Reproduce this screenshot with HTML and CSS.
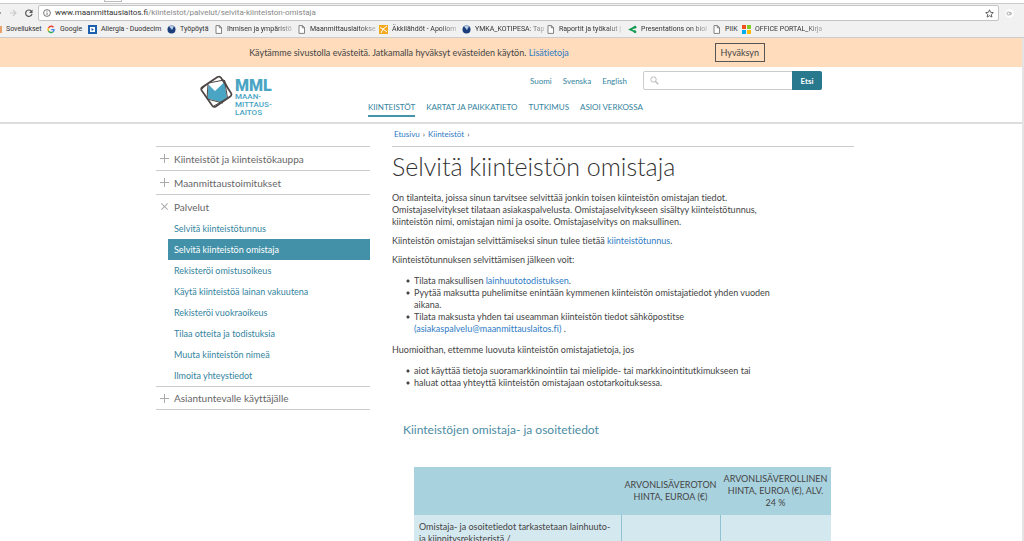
FILE: index.html
```html
<!DOCTYPE html>
<html lang="fi">
<head>
<meta charset="utf-8">
<title>Selvitä kiinteistön omistaja</title>
<link rel="stylesheet" href="styles.css">
</head>
<body>
<div class="browser">
  <div class="tab-strip"><span class="tab-edge"></span></div>
  <div class="toolbar">
    <svg class="nav-icons" width="34" height="10" viewBox="0 0 34 10" fill="none" stroke="#555" stroke-width="1.2"><path d="M0 5h1"/><path stroke="#ccc" d="M10 5h6M13 2l3 3-3 3"/><path d="M31.200 3A3.200 3.200 0 1 0 32 5.800"/><path fill="#555" stroke="none" d="M32.500 1.500v3.500h-3.500z"/></svg>
    <div class="address">
      <svg width="8" height="8" viewBox="0 0 8 8" fill="none" stroke="#555" stroke-width=".8"><circle cx="4" cy="4" r="3.400"/><path d="M4 3.500v2.500M4 1.800v.9"/></svg>
      <span class="url"><b>www.maanmittauslaitos.fi</b>/kiinteistot/palvelut/selvita-kiinteiston-omistaja</span>
      <svg width="9" height="9" viewBox="0 0 9 9" fill="none" stroke="#555" stroke-width=".9"><path d="M4.500.8l1.100 2.500 2.700.3-2 1.800.6 2.700-2.400-1.400-2.400 1.400.6-2.700-2-1.800 2.700-.3z"/></svg>
    </div>
    <svg class="ext" width="9" height="9" viewBox="0 0 9 9" fill="none" stroke="#999" stroke-width=".8"><circle cx="4.500" cy="4.500" r="4.300" stroke="none" fill="#fff"/><rect x="2" y="3" width="3" height="3" rx="1"/><path d="M5 3l2 1.500L5 6"/></svg>
  </div>
  <div class="bookmarks">
    <a href="#"><span class="apps-edge"></span><span>Sovellukset</span></a>
    <a href="#"><svg viewBox="0 0 9 9" fill="none" stroke-width="1.400"><path stroke="#ea4335" d="M1.500 3A3 3 0 0 1 6.500 2.200"/><path stroke="#fbbc05" d="M1.500 3a3 3 0 0 0 0 3"/><path stroke="#34a853" d="M1.500 6a3 3 0 0 0 4.600.8"/><path stroke="#4285f4" d="M6.100 6.800A3 3 0 0 0 7 4.600H4.200"/></svg><span>Google</span></a>
    <a href="#"><svg viewBox="0 0 9 9"><path fill="#1b5fae" d="M0 0h9v9H0z"/><path fill="#fff" d="M2 2h5v5H2z"/><path fill="#1b5fae" d="M3.500 3L6 4.500 3.500 6z"/></svg><span>Allergia - Duodecim</span></a>
    <a href="#"><svg viewBox="0 0 9 9"><circle cx="4.500" cy="4.500" r="4" fill="#1c3f7c"/><path fill="#b5cdea" d="M2 1.500q2.500-1.500 5 0L5 5z"/></svg><span>Työpöytä</span></a>
    <a class="faded" href="#"><svg viewBox="0 0 9 9" fill="#fff" stroke="#666" stroke-width=".8"><path d="M2 .6h3.500l2 2v5.800H2zM5.300.6v2.200h2.200"/></svg><span>Ihmisen ja ympäristö</span></a>
    <a class="faded" href="#"><svg viewBox="0 0 9 9" fill="#fff" stroke="#666" stroke-width=".8"><path d="M2 .6h3.500l2 2v5.800H2zM5.300.6v2.200h2.200"/></svg><span>Maanmittauslaitokse</span></a>
    <a class="faded" href="#"><svg viewBox="0 0 9 9"><path fill="#f5a81c" d="M0 0h9v9H0z"/><path fill="none" stroke="#fff" d="M1 2.500l3 1.500 4-3M2 8l2-4 4 3"/></svg><span>Äkkilähdöt - Apollom</span></a>
    <a class="faded" href="#"><svg viewBox="0 0 9 9"><circle cx="4.500" cy="4.500" r="4" fill="#1c3f7c"/><path fill="#b5cdea" d="M2 1.500q2.500-1.500 5 0L5 5z"/></svg><span>YMKA_KOTIPESA: Tap</span></a>
    <a class="faded" href="#"><svg viewBox="0 0 9 9" fill="#fff" stroke="#666" stroke-width=".8"><path d="M2 .6h3.500l2 2v5.800H2zM5.300.6v2.200h2.200"/></svg><span>Raportit ja työkalut |</span></a>
    <a class="faded" href="#"><svg viewBox="0 0 9 9" fill="#159a52"><path d="M0 4.500L7 1v2.200L4 4.500l4 1.500v2z"/><circle cx="7" cy="2.200" r="1.400"/><circle cx="7" cy="6.800" r="1.400"/></svg><span>Presentations on biol</span></a>
    <a href="#"><svg viewBox="0 0 9 9" fill="#fff" stroke="#666" stroke-width=".8"><path d="M2 .6h3.500l2 2v5.800H2zM5.300.6v2.200h2.200"/></svg><span>PIIK</span></a>
    <a class="faded" href="#"><svg viewBox="0 0 9 9"><path fill="#f1511b" d="M0 0h4v4H0z"/><path fill="#80cc28" d="M5 0h4v4H5z"/><path fill="#00adef" d="M0 5h4v4H0z"/><path fill="#fbbc09" d="M5 5h4v4H5z"/></svg><span>OFFICE PORTAL_Kirja</span></a>
  </div>
</div>
<div class="viewport">
  <div class="cookie">
    <p>Käytämme sivustolla evästeitä. Jatkamalla hyväksyt evästeiden käytön. <a href="#">Lisätietoja</a></p>
    <button type="button">Hyväksyn</button>
  </div>
  <header class="header">
    <div class="header-inner">
      <a class="logo" href="#" aria-label="Maanmittauslaitos">
        <svg width="33" height="34" viewBox="0 0 33 34" stroke-linejoin="round"><path fill="#4aa5c4" d="M8.500 9.500L15 16l9.500-9L27 23l-4.500 4.500L7.500 23.500z"/><g fill="none" stroke="#4d4644"><path stroke-width="1" d="M2 14L8.500 8 24 5l6 12M24.500 5L27.500 23 13 31.500M8 9l-1 15 16 4"/><path stroke-width="1.700" d="M2.200 12.200L17.500 2q2.200-1.200 3.500.8L31 18q1.200 2-.8 3.500L15.800 31.500q-2 1.200-3.500-.8L1.700 15.500q-1.200-2 .5-3.300z"/></g></svg>
        <span class="logo-text"><b>MML</b><span>MAAN-<br>MITTAUS-<br>LAITOS</span></span>
      </a>
      <div class="header-main">
        <div class="header-tools">
          <nav class="languages"><a href="#">Suomi</a><a href="#">Svenska</a><a href="#">English</a></nav>
          <form class="search">
            <svg width="9" height="9" viewBox="0 0 9 9" fill="none" stroke="#bbb"><circle cx="3.500" cy="3.500" r="2.700"/><path stroke-width="1.500" d="M5.500 5.500L8.300 8.300"/></svg>
            <input type="search" aria-label="Etsi sivustolta">
            <button type="submit">Etsi</button>
          </form>
        </div>
        <nav class="main-nav"><a class="current" href="#">KIINTEISTÖT</a><a href="#">KARTAT JA PAIKKATIETO</a><a href="#">TUTKIMUS</a><a href="#">ASIOI VERKOSSA</a></nav>
      </div>
    </div>
  </header>
  <div class="page">
    <nav class="side">
      <a class="section" href="#"><i class="plus"></i>Kiinteistöt ja kiinteistökauppa</a>
      <a class="section" href="#"><i class="plus"></i>Maanmittaustoimitukset</a>
      <a class="section" href="#"><i class="plus close"></i>Palvelut</a>
      <ul>
        <li><a href="#">Selvitä kiinteistötunnus</a></li>
        <li><a class="active" href="#">Selvitä kiinteistön omistaja</a></li>
        <li><a href="#">Rekisteröi omistusoikeus</a></li>
        <li><a href="#">Käytä kiinteistöä lainan vakuutena</a></li>
        <li><a href="#">Rekisteröi vuokraoikeus</a></li>
        <li><a href="#">Tilaa otteita ja todistuksia</a></li>
        <li><a href="#">Muuta kiinteistön nimeä</a></li>
        <li><a href="#">Ilmoita yhteystiedot</a></li>
      </ul>
      <a class="section last" href="#"><i class="plus"></i>Asiantuntevalle käyttäjälle</a>
    </nav>
    <main class="content">
      <nav class="crumbs"><a href="#">Etusivu</a><span>›</span><a href="#">Kiinteistöt</a><span>›</span></nav>
      <h1>Selvitä kiinteistön omistaja</h1>
      <p>On tilanteita, joissa sinun tarvitsee selvittää jonkin toisen kiinteistön omistajan tiedot.<br>Omistajaselvitykset tilataan asiakaspalvelusta. Omistajaselvitykseen sisältyy kiinteistötunnus,<br>kiinteistön nimi, omistajan nimi ja osoite. Omistajaselvitys on maksullinen.</p>
      <p>Kiinteistön omistajan selvittämiseksi sinun tulee tietää <a href="#">kiinteistötunnus</a>.</p>
      <p>Kiinteistötunnuksen selvittämisen jälkeen voit:</p>
      <ul>
        <li>Tilata maksullisen <a href="#">lainhuutotodistuksen</a>.</li>
        <li>Pyytää maksutta puhelimitse enintään kymmenen kiinteistön omistajatiedot yhden vuoden<br>aikana.</li>
        <li>Tilata maksusta yhden tai useamman kiinteistön tiedot sähköpostitse<br><a href="#">(asiakaspalvelu@maanmittauslaitos.fi)</a> .</li>
      </ul>
      <p>Huomioithan, ettemme luovuta kiinteistön omistajatietoja, jos</p>
      <ul>
        <li>aiot käyttää tietoja suoramarkkinointiin tai mielipide- tai markkinointitutkimukseen tai</li>
        <li>haluat ottaa yhteyttä kiinteistön omistajaan ostotarkoituksessa.</li>
      </ul>
      <h2>Kiinteistöjen omistaja- ja osoitetiedot</h2>
      <table>
        <colgroup><col class="col-name"><col class="col-net"><col></colgroup>
        <thead><tr><td></td><th scope="col">ARVONLISÄVEROTON<br>HINTA, EUROA (€)</th><th scope="col">ARVONLISÄVEROLLINEN<br>HINTA, EUROA (€), ALV.<br>24 %</th></tr></thead>
        <tbody><tr><td>Omistaja- ja osoitetiedot tarkastetaan lainhuuto-<br>ja kiinnitysrekisteristä /</td><td></td><td></td></tr></tbody>
      </table>
    </main>
  </div>
</div>
</body>
</html>
```
FILE: styles.css
```css
* { box-sizing: border-box; }
html, body { height: 100%; }
body {
  margin: 0;
  display: flex;
  flex-direction: column;
  overflow: hidden;
  background: #fff;
  color: #444;
  font: 9px/12px Lato, "Noto Sans", sans-serif;
  font-variant-ligatures: none;
}
a { color: #2e7bc4; text-decoration: none; }
p { margin: 0; }
ul { margin: 0; padding: 0; list-style: none; }
button, input { font: inherit; }

.browser { background: #f1f1f1; border-bottom: 1px solid #ccc; color: #444; font: 7px/10px Roboto, sans-serif; }
.tab-strip { height: 4px; border-bottom: 1px solid #ccc; background: #fff; }
.tab-edge { display: block; width: 18px; height: 2px; margin-left: 104px; border: 1px solid #bbb; border-top: 0; }
.toolbar { display: flex; align-items: center; padding: 1px 10px 0 0; }
.nav-icons { flex: none; }
.address {
  flex: 1;
  display: flex;
  align-items: center;
  gap: 4px;
  height: 16px;
  margin: 0 6px 0 4px;
  padding: 0 4px;
  border: 1px solid #c4c4c4;
  border-radius: 2px;
  background: #fff;
}
.url { flex: 1; color: #888; font-size: 8px; }
.url b { color: #333; font-weight: 400; }
.bookmarks {
  display: grid;
  grid-template-columns: 47px 41px 79px 47px 83px 82px 83px 84px 82px 84px 30px 1fr;
  align-items: center;
  height: 16px;
}
.bookmarks a { display: flex; align-items: center; gap: 4px; min-width: 0; color: #333; }
.bookmarks svg { flex: none; width: 9px; height: 9px; }
.bookmarks span { white-space: nowrap; }
.faded span { mask-image: linear-gradient(to right, #000 75%, rgba(0, 0, 0, .3)); }
.bookmarks .apps-edge { width: 2px; height: 7px; background: #e9a36a; }

.viewport { flex: 1; min-height: 0; overflow: hidden; border-right: 2px solid #e4e4e4; }
.cookie {
  display: flex;
  align-items: center;
  justify-content: center;
  gap: 146px;
  height: 29px;
  padding-right: 8px;
  background: #ffdcbc;
}
.cookie button { width: 50px; height: 19px; padding: 0; border: 1px solid #555; background: none; color: #444; }

.header { border-bottom: 2px solid #ddd; }
.header-inner { display: flex; justify-content: space-between; max-width: 622px; margin: 0 auto; height: 55px; }
.logo { display: flex; gap: 2px; padding-top: 8px; color: #4aa5c4; }
.logo-text { display: flex; flex-direction: column; padding-top: 4px; font: 500 8px/8px Roboto, sans-serif; }
.logo-text b { font-size: 16px; line-height: 14px; font-weight: 900; }
.header-main { width: 454px; }
.header-tools { display: flex; justify-content: flex-end; align-items: center; gap: 16px; padding-top: 4px; }
.languages { display: flex; gap: 11px; font-size: 8px; }
.languages a, .main-nav a, .side li a { color: #3484a0; }
.search { display: flex; align-items: center; width: 179px; height: 19px; border: 1px solid #ccc; border-radius: 2px; padding-left: 6px; }
.search input { flex: 1; min-width: 0; border: 0; background: none; outline: 0; }
.search button { width: 30px; height: 19px; padding: 0; border: 0; border-radius: 0 2px 2px 0; margin-right: -1px; background: #28798e; color: #fff; font-weight: 700; font-size: 8px; }
.main-nav { display: flex; gap: 11px; padding-top: 11px; font-size: 8px; }
.main-nav a { padding-bottom: 2px; border-bottom: 2px solid transparent; }
.main-nav .current { border-color: #4595a8; }

.page { display: flex; justify-content: space-between; max-width: 710px; margin: 0 auto; padding-right: 12px; }
.side { width: 214px; padding-top: 22px; }
.section { display: flex; align-items: center; gap: 5px; height: 24px; padding-left: 4px; border-top: 1px solid #ccc; color: #666; font-size: 10px; }
.section.last { border-bottom: 1px solid #ccc; }
.plus { width: 9px; height: 9px; background: linear-gradient(#aaa, #aaa) center / 9px 1px no-repeat, linear-gradient(#aaa, #aaa) center / 1px 9px no-repeat; }
.close { transform: rotate(45deg); }
.side ul { margin-left: 12px; }
.side li a { display: block; padding-left: 6px; line-height: 21px; }
.side li .active { background: #4391a8; color: #fff; }

.content { width: 462px; }
.crumbs { display: flex; gap: 3px; height: 23px; padding: 4px 2px 0; border-bottom: 1px solid #ccc; font-size: 8px; }
h1 { margin: 3px 0 10px; color: #333; font-size: 25px; line-height: 32px; font-weight: 300; }
.content p { margin-bottom: 7px; }
.content ul { margin: 9px 0; padding-left: 14px; }
.content li { padding-left: 8px; background: radial-gradient(circle at 2px 6px, #444 1px, transparent 2px) no-repeat; }
h2 { margin: 34px 11px 30px; color: #4c8ca3; font-size: 12px; line-height: 14px; font-weight: 400; }
table { width: 417px; margin-left: 22px; table-layout: fixed; border-collapse: collapse; background: #d4e8ef; }
.col-name { width: 207px; }
.col-net { width: 99px; }
thead { background: #a9d2df; }
th { height: 48px; padding: 0; font-weight: 400; }
td { padding: 6px 5px; vertical-align: top; }
tbody td + td { border-left: 1px solid #8fc3d3; }
```
